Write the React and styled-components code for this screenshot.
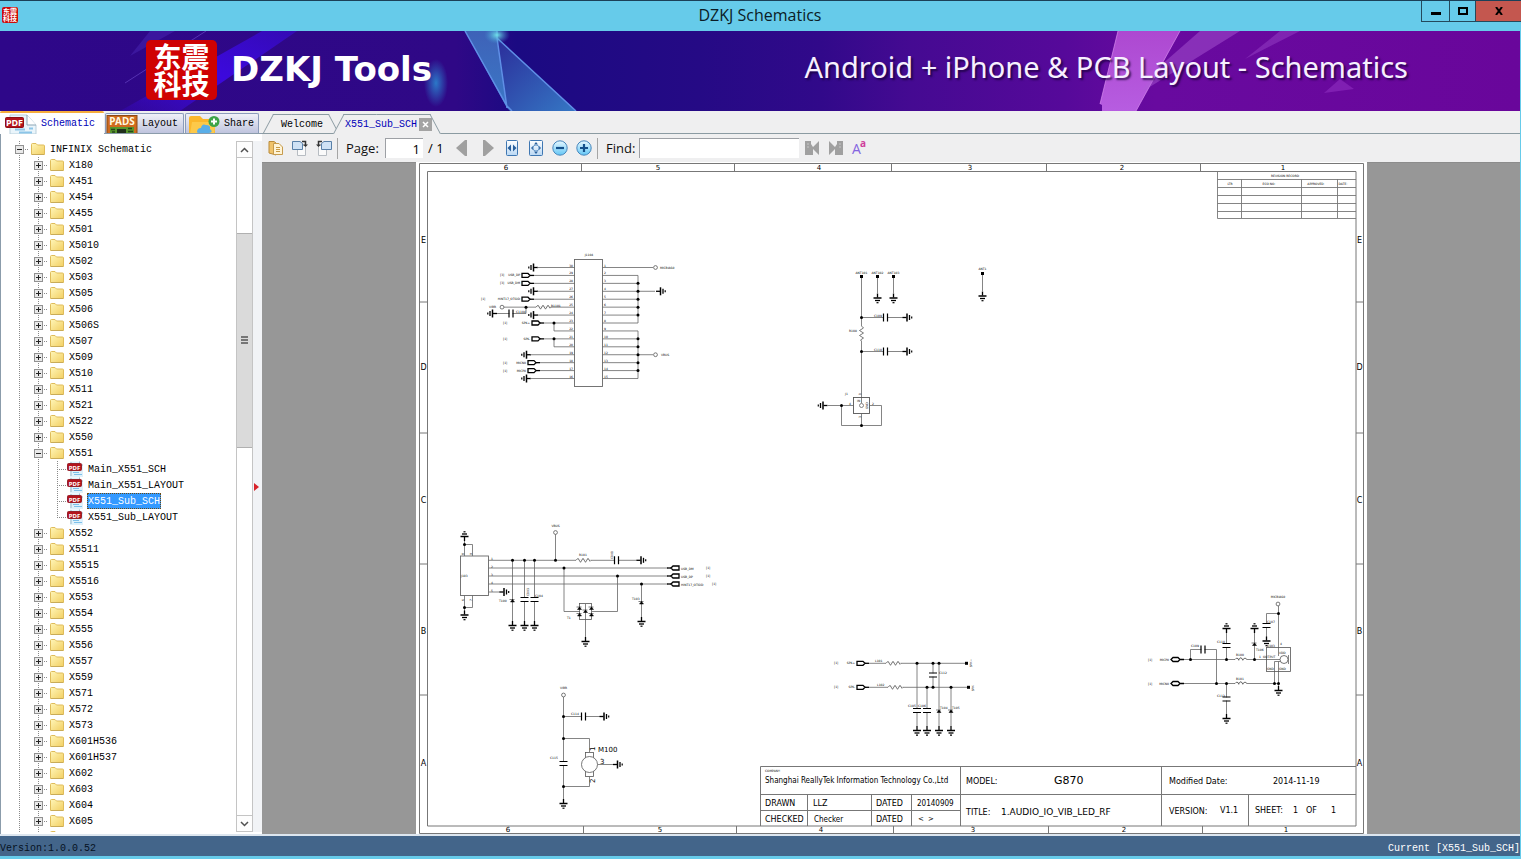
import React from "react";
import styled, { createGlobalStyle, css } from "styled-components";

const mono = `"Liberation Mono", "DejaVu Sans Mono", monospace`;
const sans = `"Open Sans", "Noto Sans", sans-serif`;

const GlobalStyle = createGlobalStyle`
  *, *::before, *::after { box-sizing: border-box; }
  html, body, #root { height: 100%; }
  body { margin: 0; overflow: hidden; background: #66cbea; color: #000; }
  button, input { font: inherit; color: inherit; }
  button { cursor: pointer; }
`;

/* ---------- window frame ---------- */

const Window = styled.div`
  display: flex;
  flex-direction: column;
  height: 100vh;
  padding: 0 1px 3px 0;
  background: #66cbea;
  border-top: 1px solid #1b4058;
`;

const TitleBar = styled.header`
  position: relative;
  display: flex;
  justify-content: center;
  flex: none;
  height: 30px;
  font-family: ${sans};
`;

const WindowTitle = styled.h1`
  margin: 0;
  font-size: 16px;
  line-height: 28px;
  font-weight: 400;
  color: #0b1c26;
`;

const AppMark = styled.span`
  position: absolute;
  left: 2px;
  top: 6px;
  width: 16px;
  height: 16px;
  display: grid;
  place-content: center;
  border-radius: 2px;
  background: #cc0a0a;
  color: #fff;
  font: 700 7px/7px "Noto Sans CJK SC", sans-serif;
  text-align: center;
`;

const WindowControls = styled.div`
  position: absolute;
  right: -1px;
  top: 0;
  display: flex;
  height: 21px;
  border: 1px solid #24495c;
  border-top: 0;
  border-right: 0;
`;

const WindowButton = styled.button`
  display: grid;
  place-items: center;
  width: ${(p) => p.$width}px;
  padding: 0;
  border: 0;
  border-right: ${(p) => (p.$close ? 0 : "1px solid #24495c")};
  background: ${(p) => (p.$close ? "#c4574f" : "transparent")};
`;

/* ---------- banner ---------- */

const Banner = styled.div`
  position: relative;
  display: flex;
  align-items: center;
  flex: none;
  height: 80px;
  padding: 0 112px 0 146px;
  overflow: hidden;
  color: #fff;
  background: linear-gradient(90deg, #2e0789 0%, #2f0886 30%, #1b0a82 34%, #250a85 46%, #31098a 54%, #450a92 60%, #56099a 70%, #680a9f 76%, #69069b 100%);
`;

const BannerArt = styled.svg`
  position: absolute;
  inset: 0;
  width: 100%;
  height: 100%;
`;

const Seal = styled.div`
  position: relative;
  display: grid;
  place-content: center;
  width: 71px;
  height: 60px;
  margin: 0 14px 2px 0;
  border-radius: 5px;
  background: #cf0202;
  font: 700 28px/27px "Noto Sans CJK SC", sans-serif;
  text-align: center;
`;

const Brand = styled.strong`
  position: relative;
  margin-bottom: 4px;
  font: 700 34px/40px "DejaVu Sans", "Noto Sans", sans-serif;
`;

const Tagline = styled.p`
  position: relative;
  margin: 0 0 8px auto;
  font: 400 29px/40px "Noto Sans", sans-serif;
  color: #f7f0ff;
  text-shadow: 2px 2px 2px rgba(20, 0, 50, 0.7);
`;

/* ---------- body ---------- */

const Body = styled.main`
  display: flex;
  flex: 1;
  min-height: 0;
  background: #efeff0;
  border-bottom: 2px solid #dde6ef;
`;

const Sidebar = styled.aside`
  display: flex;
  flex-direction: column;
  flex: none;
  width: 262px;
  font: 10px/16px ${mono};
`;

const SideTabs = styled.div`
  display: flex;
  align-items: flex-end;
  flex: none;
  gap: 1px;
  height: 23px;
  border-bottom: 1px solid #8b9cab;
`;

const SideTab = styled.button`
  display: flex;
  align-items: center;
  gap: 4px;
  width: ${(p) => p.$width}px;
  height: 20px;
  padding: 1px 0 0;
  border: 1px solid #8b9cbb;
  border-bottom: 0;
  border-radius: 2px 2px 0 0;
  background: linear-gradient(#f0f1f8, #bfc4de);
  overflow: hidden;
  white-space: nowrap;
  ${(p) =>
    p.$active &&
    css`
      height: 23px;
      margin-bottom: -1px;
      padding: 0 5px;
      border: 0;
      border-top: 2px solid #f5ac3c;
      background: #fff;
      color: #0000b8;
    `}
`;

const TreePane = styled.div`
  display: flex;
  flex: 1;
  min-height: 0;
  padding: 7px 0 2px;
  border-left: 1px solid #8b9cab;
  background: #fff;
`;

const Tree = styled.ul`
  flex: 1;
  min-width: 0;
  margin: 0;
  padding: 0 0 0 9px;
  overflow: hidden;
  list-style: none;
`;

const TreeRow = styled.li`
  display: flex;
  align-items: center;
  height: 16px;
`;

const Guide = styled.span`
  display: grid;
  place-items: center;
  flex: none;
  width: 19px;
  height: 16px;
  background:
    repeating-linear-gradient(#8a8a8a 0 1px, transparent 1px 2px) 9px 0 / 1px ${(p) => (p.$end ? "8px" : "16px")} no-repeat,
    repeating-linear-gradient(90deg, #8a8a8a 0 1px, transparent 1px 2px) 9px 8px / ${(p) => (p.$branch ? "10px" : "0")} 1px no-repeat;
`;

const Expander = styled.button`
  position: relative;
  width: 9px;
  height: 9px;
  padding: 0;
  border: 1px solid #919191;
  background: #e9e9e9;
  &::before,
  &::after {
    content: "";
    position: absolute;
    background: #222;
  }
  &::before {
    left: 1px;
    top: 3px;
    width: 5px;
    height: 1px;
  }
  &::after {
    left: 3px;
    top: 1px;
    width: 1px;
    height: ${(p) => (p.$open ? 0 : 5)}px;
  }
`;

const TreeIcon = styled.span`
  display: flex;
  flex: none;
  margin: ${(p) => (p.$file ? "0 3px 0 0" : "0 4px 0 2px")};
`;

const TreeLabel = styled.button`
  height: 16px;
  padding: 2px 1px 0;
  border: 0;
  background: ${(p) => (p.$selected ? "#3399ff" : "none")};
  color: ${(p) => (p.$selected ? "#fff" : "#000")};
  outline: ${(p) => (p.$selected ? "1px dotted #6b4a12" : "none")};
  outline-offset: -1px;
  line-height: 14px;
  white-space: nowrap;
`;

const ScrollTrack = styled.div`
  display: flex;
  flex-direction: column;
  flex: none;
  width: 17px;
  border: 1px solid #c4c4c4;
  background: #fff;
`;

const ScrollArrow = styled.button`
  display: grid;
  place-items: center;
  flex: none;
  height: 16px;
  padding: 0;
  border: 0 solid #c4c4c4;
  border-width: ${(p) => (p.$down ? "1px 0 0" : "0 0 1px")};
  background: #fdfdfd;
`;

const ScrollThumb = styled.div`
  display: grid;
  place-items: center;
  flex: 213;
  border: solid #b0b0b0;
  border-width: 1px 0;
  background: #dadada;
`;

const ScrollGap = styled.div`
  flex: ${(p) => p.$share};
`;

const Splitter = styled.div`
  display: grid;
  align-items: center;
  width: 9px;
  background: #f1f3f6;
`;

/* ---------- document area ---------- */

const DocArea = styled.section`
  display: flex;
  flex-direction: column;
  flex: 1;
  min-width: 0;
`;

const DocTabs = styled.div`
  display: flex;
  align-items: flex-end;
  flex: none;
  height: 23px;
  padding-left: 1px;
  border-bottom: 1px solid #8b9ba2;
  font: 10px/18px ${mono};
`;

const DocTab = styled.div`
  position: relative;
  display: flex;
  align-items: center;
  height: 20px;
  margin: 0 -5px -1px 0;
  padding: 0 ${(p) => (p.$active ? "9px 0 12px" : "15px 0 18px")};
  color: ${(p) => (p.$active ? "#0000b8" : "#000")};
  &::before,
  &::after {
    content: "";
    position: absolute;
    top: 0;
    bottom: ${(p) => (p.$active ? 0 : "1px")};
    border-top: 1px solid #8b9ba2;
    background: #efeff0;
  }
  &::before {
    left: 0;
    right: 50%;
    border-left: 1px solid #8b9ba2;
    transform: skewX(-28deg);
    transform-origin: bottom;
  }
  &::after {
    left: 50%;
    right: 0;
    border-right: 1px solid #8b9ba2;
    transform: skewX(28deg);
    transform-origin: bottom;
  }
`;

const DocTabButton = styled.button`
  position: relative;
  z-index: 1;
  padding: 1px 0 0;
  border: 0;
  background: none;
`;

const CloseTab = styled.button`
  position: relative;
  z-index: 1;
  display: grid;
  place-items: center;
  width: 13px;
  height: 13px;
  margin-left: 2px;
  padding: 0;
  border: 0;
  background: #a3a3a3;
`;

const Toolbar = styled.div`
  display: flex;
  align-items: center;
  flex: none;
  height: 28px;
  padding-left: 2px;
  background: #efeff0;
  font: 13px/20px ${sans};
`;

const ToolButton = styled.button`
  display: grid;
  place-items: center;
  width: 24px;
  height: 24px;
  padding: 0;
  border: 0;
  background: none;
`;

const ToolGroup = styled.div`
  display: flex;
  align-items: center;
  margin-left: ${(p) => p.$space || 0}px;
`;

const Divider = styled.span`
  width: 1px;
  height: 21px;
  margin: 0 8px 0 1px;
  background: #a5a5a5;
`;

const FieldLabel = styled.label`
  width: ${(p) => p.$width}px;
  color: #111;
`;

const Field = styled.input`
  width: ${(p) => p.$width}px;
  height: 20px;
  padding: 0 3px;
  border: 0;
  border-top: 1px solid #9da0a5;
  border-left: 1px solid #9da0a5;
  background: #fff;
  text-align: ${(p) => p.$align || "left"};
`;

const PageCount = styled.span`
  width: 27px;
  padding-left: 5px;
  white-space: nowrap;
`;

const Viewer = styled.div`
  display: flex;
  justify-content: center;
  flex: 1;
  min-height: 0;
  background: #979797;
  box-shadow: inset 0 1px #8c8c8c;
`;

const Sheet = styled.svg`
  height: 100%;
  max-width: 100%;
  background: #fff;
  font-family: "DejaVu Sans", sans-serif;
`;

const StatusBar = styled.footer`
  display: flex;
  justify-content: space-between;
  flex: none;
  height: 20px;
  padding-top: 6px;
  background: #43658a;
  color: #fff;
  font: 10px/14px ${mono};
`;

const Version = styled.span`
  color: #06121f;
`;

/* ---------- icons ---------- */

const PdfIcon = ({ large }) => (
  <svg width={large ? 32 : 17} height={large ? 20 : 16} viewBox={large ? "0 0 32 20" : "0 0 17 16"}>
    {large ? (
      <>
        <path d="M5 20V1H22L31 11V20Z" fill="#eaf5fb" stroke="#b9cfdb" />
        <path d="M22 1V11H31" fill="#fff" stroke="#8ba5b5" />
        <path d="M10 15.500H20M14 18.500H27M24 14.500H28" stroke="#8cc5e8" strokeWidth="2" />
        <rect x="0.500" y="3.500" width="18" height="10" rx="1" fill="#b3131c" stroke="#8e0d14" />
        <text x="9.500" y="12" fontSize="9" fontWeight="700" fill="#fff" textAnchor="middle" fontFamily="Noto Sans, sans-serif">PDF</text>
      </>
    ) : (
      <>
        <path d="M3 16V0.500H12.500L16 4V16Z" fill="#dff1fb" />
        <path d="M12.500 0.500V4H16" stroke="#9db8c8" fill="#fff" />
        <path d="M4 1V15" stroke="#9db8c8" />
        <path d="M6 11.500H12M7 13.500H15" stroke="#7dc0ea" fill="none" />
        <rect x="0.500" y="2.500" width="14" height="7" rx="1" fill="#b3131c" stroke="#96222a" />
        <text x="7.500" y="8.500" fontSize="6" fontWeight="700" fill="#fff" textAnchor="middle" fontFamily="Noto Sans, sans-serif">PDF</text>
      </>
    )}
  </svg>
);

const FolderIcon = () => (
  <svg width="14" height="13" viewBox="0 0 14 13">
    <defs>
      <linearGradient id="folder" x1="0" y1="0" x2="1" y2="1">
        <stop offset="0" stopColor="#fff6b8" />
        <stop offset="1" stopColor="#f2cf63" />
      </linearGradient>
    </defs>
    <path d="M0.500 11.500V1.500Q0.500 0.500 1.500 0.500H5L6.500 2H12.500Q13.500 2 13.500 3V11.500Z" fill="url(#folder)" stroke="#dfbc5b" />
    <path d="M1 11.500H13" stroke="#c9ab58" />
  </svg>
);

const PadsIcon = () => (
  <svg width="32" height="19" viewBox="0 0 32 19">
    <rect x="1" y="0.500" width="30" height="20" fill="#cf6a1e" stroke="#8a4a17" />
    <text x="16" y="10" fontSize="10" fontWeight="700" fill="#fff7df" textAnchor="middle" fontFamily="Noto Sans, sans-serif">PADS</text>
    <rect x="4" y="12" width="24" height="7" fill="#57962c" />
    <rect x="11" y="14" width="9" height="5" fill="#20301c" />
    <path d="M5 14.500H9M22 13.500H26M6 17H9M22 16.500H27" stroke="#24461b" strokeWidth="1.500" />
  </svg>
);

const ShareIcon = () => (
  <svg width="34" height="19" viewBox="-2 0 34 19">
    <path d="M1 19V3Q1 1 3 1H12L15 4H25Q27 4 27 6V19Z" fill="#fbb72c" />
    <path d="M2 19L4 7H28L26 19Z" fill="#fdc94a" />
    <path d="M9 17Q9 13 13 13Q14 8 18 10Q23 10 22 14Q26 17 21 18H11Q9 18 9 17Z" fill="#5aaee8" />
    <circle cx="26" cy="6.500" r="5.500" fill="#3da447" />
    <path d="M23 6.500H29M26 3.500V9.500" stroke="#fff" strokeWidth="2" />
  </svg>
);

const OpenIcon = () => (
  <svg width="16" height="16" viewBox="0 0 16 16">
    <path d="M1 1.500H6L8 3V15L1 13Z" fill="#f0c36a" stroke="#b98b3a" />
    <path d="M5.500 3.500H11L14.500 7V14.500H5.500Z" fill="#fff4d6" stroke="#c69b4d" />
    <path d="M8 7.500H12M8 9.500H12M8 11.500H12" stroke="#c79a45" />
  </svg>
);

const RotateIcon = ({ flip }) => (
  <svg width="16" height="16" viewBox="0 0 16 16">
    <g transform={flip ? "translate(16 0) scale(-1 1)" : undefined}>
      <path d="M5.500 5.500H13.500V15.500H5.500Z" fill="#fafafa" stroke="#b7bcc2" />
      <path d="M0.500 1.500H8L10.500 3.500V9.500H0.500Z" fill="#cfe2f5" stroke="#5980a8" />
      <path d="M10 1.500H13.500V5" fill="none" stroke="#333" strokeWidth="1.500" />
      <path d="M11 4.500H16L13.500 7Z" fill="#333" />
    </g>
  </svg>
);

const Triangle = ({ flip }) => (
  <svg width="12" height="16" viewBox="0 0 12 16">
    <path d={flip ? "M1 0V16H3L12 8L3 0Z" : "M11 0V16H9L0 8L9 0Z"} fill="#a0a0a0" />
  </svg>
);

const FitIcon = ({ page }) => (
  <svg width="14" height="17" viewBox="0 0 14 17">
    <defs>
      <linearGradient id="fit" x1="0" y1="0" x2="0" y2="1">
        <stop offset="0" stopColor="#fff" />
        <stop offset="1" stopColor="#bad8f4" />
      </linearGradient>
    </defs>
    <rect x={page ? 0.5 : 1.5} y="0.500" width={page ? 13 : 11} height="15" rx="1" fill="url(#fit)" stroke="#3f77b2" />
    <path d={page ? "M7 2L9 4.500H5ZM7 14L5 11.500H9ZM2 8L4 6V10ZM12 8L10 6V10Z" : "M2.500 8L6 4.500V11.500ZM11.500 8L8 4.500V11.500Z"} fill="#285f9c" />
    {page && <circle cx="7" cy="8" r="3" fill="none" stroke="#6b9bcb" />}
  </svg>
);

const ZoomIcon = ({ plus }) => (
  <svg width="16" height="16" viewBox="0 0 16 16">
    <defs>
      <linearGradient id="lens" x1="0" y1="0" x2="0" y2="1">
        <stop offset="0" stopColor="#e8f8ff" />
        <stop offset="1" stopColor="#62c6f6" />
      </linearGradient>
    </defs>
    <circle cx="8" cy="8" r="7.200" fill="url(#lens)" stroke="#4787bd" />
    <path d={plus ? "M4 8H12M8 4V12" : "M4 8H12"} stroke="#14508b" strokeWidth="2.200" />
  </svg>
);

const FindIcon = ({ next }) => (
  <svg width="16" height="16" viewBox="0 0 16 16">
    <g transform={next ? "translate(16 0) scale(-1 1)" : undefined} fill="#a0a0a0">
      <path d="M1 1H7V4L9 7L15 1V15L9 9V15H1Z" />
      <path d="M3 4H5M3 7H5" stroke="#c6c6c6" />
    </g>
  </svg>
);

const CaseIcon = () => (
  <svg width="18" height="20" viewBox="0 0 18 20" fontFamily="Open Sans, sans-serif">
    <text x="1" y="16" fontSize="14" fill="#8465e0">A</text>
    <text x="9" y="9" fontSize="10" fontWeight="700" fill="#cf3f9c">a</text>
  </svg>
);

const Chevron = ({ down }) => (
  <svg width="9" height="6" viewBox="0 0 9 6">
    <path d={down ? "M1 1L4.500 4.500L8 1" : "M1 5L4.500 1.500L8 5"} fill="none" stroke="#505050" strokeWidth="1.500" />
  </svg>
);

/* ---------- schematic symbols ---------- */

const angle = { down: 0, left: 90, up: 180, right: 270 };

const Ground = ({ x, y, dir = "down" }) => (
  <g transform={`translate(${x} ${y}) rotate(${angle[dir]})`} stroke="#000">
    <path d="M0 -6V-2" strokeWidth="1.300" />
    <path d="M-4 -1.500H4" strokeWidth="1.500" />
    <path d="M-2.500 1H2.500" strokeWidth="1.300" />
    <path d="M-1 3.200H1" strokeWidth="1.200" />
  </g>
);

const Port = ({ x, y, flip }) => (
  <g transform={`translate(${x} ${y})${flip ? " scale(-1 1)" : ""}`} stroke="#000" fill="none">
    <path d="M0 -2H6L8 0L6 2H0Z" strokeWidth="1.300" />
    <path d="M8 0H12" strokeWidth="1.300" />
  </g>
);

const Node = ({ x, y }) => <circle cx={x} cy={y} r="1.500" fill="#000" />;
const Pad = ({ x, y }) => <rect x={x - 1.5} y={y - 1.5} width="3" height="3" fill="#000" />;
const Terminal = ({ x, y }) => <circle cx={x} cy={y} r="1.900" fill="#fff" stroke="#444" strokeWidth="0.700" />;

const Cap = ({ x, y, across }) => (
  <g transform={`translate(${x} ${y})${across ? " rotate(90)" : ""}`}>
    <rect x="-4" y="-1.500" width="8" height="3" fill="#fff" />
    <path d="M-4 -2H4M-4 2H4" stroke="#000" strokeWidth="1.200" />
  </g>
);

const Resistor = ({ x, y, vertical }) => (
  <g transform={`translate(${x} ${y})${vertical ? " rotate(90)" : ""}`} fill="none">
    <path d="M0 0H15" stroke="#fff" strokeWidth="1.500" />
    <path d="M0 0L2 -2L4.500 2L7 -2L9.500 2L12 -2L14 1L15 0" stroke="#555" strokeWidth="0.800" />
  </g>
);

const Coil = ({ x, y }) => (
  <g transform={`translate(${x} ${y})`} fill="none">
    <path d="M0 0H12" stroke="#fff" strokeWidth="1.500" />
    <path d="M0 0Q1 -2 3 -1Q4 2 4 0Q5 -3 7 -1Q8 2 8 0Q10 -3 12 0" stroke="#444" strokeWidth="0.800" />
  </g>
);

const Diode = ({ x, y }) => <path d={`M${x - 2} ${y + 1.5}H${x + 2}L${x} ${y - 1}ZM${x - 3} ${y - 1}H${x + 2}`} fill="#000" stroke="#000" strokeWidth="0.500" />;

const Tag = ({ x, y, children, rotate, end, mid }) => (
  <text
    x={x}
    y={y}
    fontSize="3"
    fill="#000"
    textAnchor={end ? "end" : mid ? "middle" : "start"}
    transform={rotate ? `rotate(-90 ${x} ${y})` : undefined}
  >
    {children}
  </text>
);

const Wire = ({ d }) => <path d={d} fill="none" stroke="#666" strokeWidth="0.800" />;

const pinY = (i) => 267.5 + i * 7.93;

const Connector = () => (
  <g>
    <Tag x={589} y={256} mid>J1104</Tag>
    <rect x="574.500" y="259.500" width="28" height="127" fill="none" stroke="#666" strokeWidth="0.900" />
    {Array.from({ length: 15 }, (_, i) => (
      <g key={i}>
        <Tag x={573} y={pinY(i) - 1} end>{30 - i}</Tag>
        <Tag x={604} y={pinY(i) - 1}>{i + 1}</Tag>
        <Wire d={`M602.500 ${pinY(i)}H${i === 0 || i === 11 ? 653 : 638}`} />
      </g>
    ))}
    <Wire d={`M638 ${pinY(1)}V${pinY(7)}M638 ${pinY(8)}V${pinY(14)}M638 ${pinY(3)}H655`} />
    {[2, 3, 4, 5, 6, 9, 10, 11, 12, 13].map((i) => <Node key={i} x={638} y={pinY(i)} />)}
    <Ground x={662} y={pinY(3)} dir="right" />
    <Terminal x={655.5} y={pinY(0)} />
    <Terminal x={655.5} y={pinY(11)} />
    <Tag x={660} y={pinY(0) + 1}>MICBIAS0</Tag>
    <Tag x={661} y={pinY(11) + 1}>VBUS</Tag>

    {[[0, 532], [3, 532], [6, 532], [11, 525], [14, 525]].map(([i, x]) => (
      <g key={i}>
        <Ground x={x} y={pinY(i)} dir="left" />
        <Wire d={`M${x + 5} ${pinY(i)}H574.500`} />
      </g>
    ))}
    {[
      [1, 522, "USB_DP", "[3]", 500],
      [2, 522, "USB_DM", "[3]", 500],
      [4, 522, "HINT17_OTGID", "[1]", 481],
      [7, 532, "SPK+", "[1]", 503],
      [9, 532, "SPK-", "[1]", 503],
      [12, 528, "MICN0", "[1]", 503],
      [13, 528, "MICP0", "[1]", 503],
    ].map(([i, x, name, sheet, sx]) => (
      <g key={i}>
        <Port x={x} y={pinY(i)} />
        <Wire d={`M${x + 12} ${pinY(i)}H574.500`} />
        <Tag x={x - 2} y={pinY(i) + 1} end>{name}</Tag>
        <Tag x={sx} y={pinY(i) + 1}>{sheet}</Tag>
      </g>
    ))}
    <Wire d={`M554 ${pinY(7)}V${pinY(8)}H574.500M554 ${pinY(9)}V${pinY(10)}H574.500`} />
    <Node x={554} y={pinY(7)} />
    <Node x={554} y={pinY(9)} />
    <Wire d={`M504 ${pinY(5)}H574.500M526 ${pinY(5)}V313.500H495`} />
    <Resistor x={536} y={pinY(5)} />
    <Node x={526} y={pinY(5)} />
    <Terminal x={502} y={pinY(5)} />
    <Cap x={511} y={313.5} across />
    <Ground x={491} y={313.5} dir="left" />
    <Tag x={489} y={308}>VIBR</Tag>
    <Tag x={551} y={306.5}>R1101</Tag>
    <Tag x={516} y={312.5}>C1104</Tag>
  </g>
);

const Antennas = () => (
  <g>
    <Tag x={861.5} y={273.5} mid>ANT101</Tag>
    <Tag x={877.5} y={273.5} mid>ANT102</Tag>
    <Tag x={893.5} y={273.5} mid>ANT103</Tag>
    <Tag x={982.5} y={270} mid>ANT1</Tag>
    <Wire d="M861.500 277V398M877.500 277V293M893.500 277V293M982.500 274V291M861.500 317.500H903M861.500 351.500H903" />
    {[861.5, 877.5, 893.5].map((x) => <Pad key={x} x={x} y={276.5} />)}
    <Pad x={982.5} y={273.5} />
    <Ground x={877.5} y={299.5} />
    <Ground x={893.5} y={299.5} />
    <Ground x={982.5} y={297.5} />
    {[317.5, 351.5].map((y, i) => (
      <g key={y}>
        <Node x={861.5} y={y} />
        <Cap x={885.5} y={y} across />
        <Ground x={908.5} y={y} dir="right" />
        <Tag x={874} y={y - 1}>{i ? "C110" : "C109"}</Tag>
      </g>
    ))}
    <Resistor x={861.5} y={326} vertical />
    <Tag x={849} y={332}>R108</Tag>
    <rect x="853.500" y="397.500" width="16" height="16" fill="none" stroke="#555" strokeWidth="0.900" />
    <circle cx="861.500" cy="405.500" r="2" fill="none" stroke="#555" strokeWidth="0.700" />
    <Wire d="M828 405.500H853.500M841.500 405.500V425.500H881.500V405.500H869.500M861.500 413.500V425.500M861.500 398V403" />
    <Node x={841.5} y={405.5} />
    <Node x={861.5} y={425.5} />
    <Ground x={821.5} y={405.5} dir="left" />
    <Tag x={845} y={395}>J1</Tag>
    <Tag x={849} y={404.5}>4</Tag>
    <Tag x={872} y={404.5}>2</Tag>
    <Tag x={861} y={395} rotate>1</Tag>
    <Tag x={861} y={418} rotate>3</Tag>
    <Tag x={867.5} y={409} rotate>GND</Tag>
    <Tag x={857} y={402}>IN</Tag>
  </g>
);

const Usb = () => (
  <g>
    <rect x="460.500" y="556" width="28" height="39.500" fill="none" stroke="#666" strokeWidth="0.900" />
    <Tag x={461} y={576.5}>J103</Tag>
    <Wire d="M464.500 556V540M472.500 556V544.500H464.500M464.500 595.500V611M472.500 595.500V607.500H464.500" />
    <Node x={464.5} y={544.5} />
    <Node x={464.5} y={607.5} />
    <Ground x={464.5} y={535} dir="up" />
    <Ground x={464.5} y={616.5} />
    {[["8", 464, 555], ["9", 472, 555], ["6", 464, 601], ["7", 472, 601]].map(([t, x, y]) => <Tag key={t} x={x} y={y} rotate>{t}</Tag>)}
    {[1, 2, 3, 4, 5].map((n) => <Tag key={n} x={491} y={551.5 + n * 8}>{n}</Tag>)}
    <Wire d="M488.500 560.300H637M488.500 568H668M488.500 576H668M488.500 584H668M488.500 592H500" />
    <Wire d="M512.500 560V621M524.500 560V621M534.500 560V621M555.500 534V560M564 568V611.500H580M617.500 576V611.500H592M641.500 584V617M585.500 604V637" />
    {[512.5, 524.5, 534.5, 555.5].map((x) => <Node key={x} x={x} y={560.3} />)}
    <Node x={564} y={568} />
    <Node x={617.5} y={576} />
    <Node x={641.5} y={584} />
    <Terminal x={555.5} y={532.5} />
    <Tag x={555.5} y={526.5} mid>VBUS</Tag>
    <Resistor x={576} y={560.3} />
    <Tag x={579} y={556}>R101</Tag>
    <Cap x={616.5} y={560.3} across />
    <Tag x={613} y={559} rotate>C101</Tag>
    <Ground x={642.5} y={560.3} dir="right" />
    <Ground x={505.5} y={592} dir="right" />
    {[[568, "USB_DM", 706], [576, "USB_DP", 706], [584, "HINT17_OTGID", 712]].map(([y, name, sx]) => (
      <g key={name}>
        <Port x={679} y={y} flip />
        <Tag x={681} y={y + 1.5}>{name}</Tag>
        <Tag x={sx} y={y + 1}>[1]</Tag>
      </g>
    ))}
    <Diode x={512.5} y={600.5} />
    <Diode x={641.5} y={602.5} />
    <Cap x={524.5} y={599.5} />
    <Cap x={534.5} y={599.5} />
    {[512.5, 524.5, 534.5].map((x) => <Ground key={x} x={x} y={627} />)}
    <Ground x={641.5} y={623} />
    <Ground x={585.5} y={643} />
    <Tag x={499} y={602}>T100</Tag>
    <Tag x={529} y={596} rotate>C103</Tag>
    <Tag x={535} y={597}>C104</Tag>
    <Tag x={632} y={600}>T103</Tag>
    <Tag x={567} y={618.5}>T1</Tag>
    <rect x="579.500" y="603.500" width="12" height="16" fill="none" stroke="#555" strokeWidth="0.800" />
    <Diode x={585.5} y={611} />
    {[[579.5, 608], [579.5, 614.5], [591.5, 608], [591.5, 614.5]].map(([x, y]) => <Diode key={`${x}-${y}`} x={x} y={y} />)}
  </g>
);

const Motor = () => (
  <g>
    <Tag x={563.5} y={689} mid>VIBR</Tag>
    <Wire d="M563.500 697V799M563.500 716.500H601M563.500 738.500H589.500V752M589.500 776.500V786.500H563.500M597.500 764.500H613" />
    <Terminal x={563.5} y={695} />
    {[716.5, 738.5, 786.5].map((y) => <Node key={y} x={563.5} y={y} />)}
    <Cap x={583.5} y={716.5} across />
    <Ground x={605.5} y={716.5} dir="right" />
    <Tag x={571} y={715}>C114</Tag>
    <Cap x={563.5} y={763.5} />
    <Tag x={550} y={758.5}>C115</Tag>
    <Ground x={563.5} y={805} />
    <rect x="585.500" y="752.500" width="8" height="5" fill="#fff" stroke="#555" strokeWidth="0.800" />
    <rect x="585.500" y="771.500" width="8" height="5" fill="#fff" stroke="#555" strokeWidth="0.800" />
    <circle cx="589.500" cy="764.500" r="8" fill="#fff" stroke="#555" strokeWidth="0.800" />
    <Ground x={619} y={764.5} dir="right" />
    <text x="598" y="752" fontSize="7">M100</text>
    <text x="600" y="764" fontSize="7">3</text>
    <text x="595" y="751" fontSize="7" transform="rotate(-90 595 751)">1</text>
    <text x="595" y="783" fontSize="7" transform="rotate(-90 595 783)">2</text>
  </g>
);

const Speaker = () => (
  <g>
    {[[663.3, "SPK+", "L101", 886, 966], [687.3, "SPK-", "L102", 888, 968]].map(([y, name, coil, rx, ex]) => (
      <g key={name}>
        <Tag x={834} y={y + 1}>[1]</Tag>
        <Tag x={855} y={y + 1} end>{name}</Tag>
        <Port x={857} y={y} />
        <Wire d={`M869 ${y}H${ex}`} />
        <Resistor x={rx} y={y} />
        <Tag x={rx - 11} y={y - 1.5}>{coil}</Tag>
        <Pad x={ex + 0.5} y={y} />
        <Tag x={ex + 6} y={y + 4} rotate>{name}</Tag>
      </g>
    ))}
    <Wire d="M917 663V726M927 687V726M933 663V687M939 663V726M951 687V726" />
    {[[917, 663.3], [933, 663.3], [939, 663.3], [927, 687.3], [933, 687.3], [951, 687.3]].map(([x, y]) => <Node key={`${x}-${y}`} x={x} y={y} />)}
    <Cap x={933} y={675} />
    <Cap x={917} y={710.5} />
    <Cap x={927} y={710.5} />
    <Diode x={939} y={711} />
    <Diode x={951} y={711} />
    {[917, 927, 939, 951].map((x) => <Ground key={x} x={x} y={732} />)}
    <Tag x={939} y={674}>C112</Tag>
    <Tag x={908} y={707}>C105</Tag>
    <Tag x={918} y={707}>C106</Tag>
    <Tag x={940} y={708.5}>T104</Tag>
    <Tag x={952} y={708.5}>T105</Tag>
  </g>
);

const Microphone = () => (
  <g>
    <Wire d="M1182 659.500H1280M1182 683.500H1278.500M1190.500 659.500V649.500H1216.500V683.500M1226.500 632V659.500M1226.500 683.500V714M1254.500 632V659.500M1278.500 606V656M1278.500 613.500H1266.500V637M1274.500 683.500V661.500H1282M1278.500 661.500V686" />
    <rect x="1266.500" y="647.500" width="24" height="24" fill="none" stroke="#555" strokeWidth="0.800" />
    {[[659.5, "MICP0"], [683.5, "MICN0"]].map(([y, name]) => (
      <g key={name}>
        <Tag x={1148} y={y + 1}>[1]</Tag>
        <Tag x={1169} y={y + 1} end>{name}</Tag>
        <path d={`M1173 ${y - 2}H1178L1180 ${y}L1178 ${y + 2}H1173L1171 ${y}ZM1180 ${y}H1184`} fill="none" stroke="#000" strokeWidth="1.300" />
        <Coil x={1235} y={y} />
        <Tag x={1236} y={y - 3.5}>{name === "MICP0" ? "B100" : "B101"}</Tag>
      </g>
    ))}
    {[[1190.5, 659.5], [1226.5, 659.5], [1254.5, 659.5], [1216.5, 683.5], [1226.5, 683.5], [1274.5, 683.5], [1278.5, 683.5], [1278.5, 613.5]].map(([x, y]) => <Node key={`${x}-${y}`} x={x} y={y} />)}
    <Cap x={1203} y={649.5} across />
    <Cap x={1226.5} y={645.5} />
    <Cap x={1226.5} y={699} />
    <Cap x={1266.5} y={625.5} />
    <Diode x={1254.5} y={644} />
    <Ground x={1226.5} y={627} dir="up" />
    <Ground x={1254.5} y={627} dir="up" />
    <Ground x={1226.5} y={720} />
    <Ground x={1266.5} y={642.5} />
    <Ground x={1278.5} y={692} />
    <Terminal x={1278} y={604} />
    <Tag x={1278} y={598} mid>MICBIAS0</Tag>
    <Tag x={1191} y={647}>C109</Tag>
    <Tag x={1217} y={643}>C110</Tag>
    <Tag x={1217} y={696.5}>C113</Tag>
    <Tag x={1267} y={622.5}>C107</Tag>
    <Tag x={1256} y={651}>T106</Tag>
    <Tag x={1259} y={658}>1</Tag>
    <Tag x={1263} y={657.5}>OUTPUT</Tag>
    <Tag x={1279} y={653.5}>VDD</Tag>
    <Tag x={1267} y={669.5}>GND</Tag>
    <Tag x={1279} y={669.5}>GND</Tag>
    <Tag x={1267} y={646.5}>U103</Tag>
    <Tag x={1280} y={645}>4</Tag>
    <circle cx="1284" cy="659.500" r="4" fill="#fff" stroke="#555" strokeWidth="0.800" />
    <Wire d="M1288.500 655V664" />
  </g>
);

const condensedText = [
  [765, 783, "Shanghai ReallyTek Information Technology Co.,Ltd", 8],
  [917, 806, "20140909", 8],
  [814, 822, "Checker", 8],
];

const blockText = [
  [966, 784, "MODEL:", 8],
  [1054, 784, "G870", 11],
  [1169, 784, "Modified Date:", 8],
  [1273, 784, "2014-11-19", 8],
  [765, 806, "DRAWN", 8],
  [813, 806, "LLZ", 8],
  [876, 806, "DATED", 8],
  [765, 822, "CHECKED", 8],
  [876, 822, "DATED", 8],
  [918, 821, "<", 7],
  [928, 821, ">", 7],
  [966, 815, "TITLE:", 8],
  [1001, 815, "1.AUDIO_IO_VIB_LED_RF", 9],
  [1169, 814, "VERSION:", 8],
  [1220, 813, "V1.1", 8],
  [1255, 813, "SHEET:", 8],
  [1293, 813, "1", 8],
  [1306, 813, "OF", 8],
  [1331, 813, "1", 8],
];

const Frame = () => (
  <g>
    <path d="M419.500 163.500H1363.500V833.500H419.500ZM427.500 171.500H1356V826H427.500Z" fill="none" stroke="#777" />
    <path
      d="M581.500 163V171M734.500 163V171M891.500 163V171M1046.500 163V171M1200.500 163V171M583.500 826V834M736.500 826V834M893.500 826V834M1048.500 826V834M1202.500 826V834M419 302H427M419 433H427M419 564H427M419 695H427M1356 302H1363M1356 433H1363M1356 564H1363M1356 695H1363"
      stroke="#777"
    />
    {[6, 5, 4, 3, 2, 1].map((n, i) => (
      <g key={n} fontSize="7" textAnchor="middle">
        <text x={[506, 658, 819, 970, 1122, 1283][i]} y="170">{n}</text>
        <text x={[508, 660, 821, 973, 1124, 1286][i]} y="832">{n}</text>
      </g>
    ))}
    {["E", "D", "C", "B", "A"].map((n, i) => (
      <g key={n} fontSize="8" textAnchor="middle">
        <text x="423.500" y={[243, 370, 503, 634, 766][i]}>{n}</text>
        <text x="1359.500" y={[243, 370, 503, 634, 766][i]}>{n}</text>
      </g>
    ))}
    <path d="M1217.500 171V218.500H1356M1217.500 179.500H1356M1217.500 187.500H1356M1217.500 195.500H1356M1217.500 203.500H1356M1217.500 211.500H1356M1241.500 179V218M1301.500 179V218M1337.500 179V218" fill="none" stroke="#777" strokeWidth="0.900" />
    <Tag x={1285} y={176.5} mid>REVISION RECORD</Tag>
    <Tag x={1230} y={185} mid>LTR</Tag>
    <Tag x={1269} y={185} mid>ECO NO:</Tag>
    <Tag x={1316} y={185} mid>APPROVED:</Tag>
    <Tag x={1343} y={185} mid>DATE:</Tag>
    <path d="M760.500 826V766.500H1356M760.500 794.500H1356M760.500 810.500H960.500M960.500 766V826M1161.500 766V826M1248.500 794V826M807.500 794V826M871.500 794V826M911.500 794V826" fill="none" stroke="#777" />
    <Tag x={765} y={772}>COMPANY:</Tag>
    <g fontFamily="DejaVu Sans Condensed, DejaVu Sans, sans-serif">
      {condensedText.map(([x, y, t, size]) => <text key={`${x}-${y}`} x={x} y={y} fontSize={size}>{t}</text>)}
    </g>
    {blockText.map(([x, y, t, size]) => <text key={`${x}-${y}`} x={x} y={y} fontSize={size}>{t}</text>)}
  </g>
);

/* ---------- data ---------- */

const before = ["X180", "X451", "X454", "X455", "X501", "X5010", "X502", "X503", "X505", "X506", "X506S", "X507", "X509", "X510", "X511", "X521", "X522", "X550"];
const files = ["Main_X551_SCH", "Main_X551_LAYOUT", "X551_Sub_SCH", "X551_Sub_LAYOUT"];
const after = ["X552", "X5511", "X5515", "X5516", "X553", "X554", "X555", "X556", "X557", "X559", "X571", "X572", "X573", "X601H536", "X601H537", "X602", "X603", "X604", "X605", "X606"];

const Folder = ({ name, open, root }) => (
  <TreeRow role="treeitem" aria-expanded={!!open}>
    {!root && <Guide />}
    <Guide $branch>
      <Expander $open={open} aria-label={`${open ? "Collapse" : "Expand"} ${name}`} />
    </Guide>
    <TreeIcon><FolderIcon /></TreeIcon>
    <TreeLabel>{name}</TreeLabel>
  </TreeRow>
);

const FileRow = ({ name, selected, last }) => (
  <TreeRow role="treeitem" aria-selected={!!selected}>
    <Guide />
    <Guide />
    <Guide $branch $end={last} />
    <TreeIcon $file><PdfIcon /></TreeIcon>
    <TreeLabel $selected={selected}>{name}</TreeLabel>
  </TreeRow>
);

export default function App() {
  return (
    <>
      <GlobalStyle />
      <Window>
        <TitleBar>
          <AppMark aria-hidden="true">东震<br />科技</AppMark>
          <WindowTitle>DZKJ Schematics</WindowTitle>
          <WindowControls>
            <WindowButton $width={28} aria-label="Minimize">
              <svg width="10" height="10"><path d="M0 7.500H10" stroke="#000" strokeWidth="3" /></svg>
            </WindowButton>
            <WindowButton $width={26} aria-label="Maximize">
              <svg width="10" height="8"><rect x="1" y="1" width="8" height="6" fill="none" stroke="#000" strokeWidth="2" /></svg>
            </WindowButton>
            <WindowButton $width={45} $close aria-label="Close">
              <svg width="8" height="8"><path d="M1 0L7 8M7 0L1 8" stroke="#000" strokeWidth="2" /></svg>
            </WindowButton>
          </WindowControls>
        </TitleBar>

        <Banner>
          <BannerArt viewBox="0 0 1520 80" preserveAspectRatio="none" aria-hidden="true">
            <defs>
              <linearGradient id="shard" x1="0" y1="0" x2="0" y2="1">
                <stop offset="0" stopColor="#3e62b8" />
                <stop offset="1" stopColor="#3b78c6" />
              </linearGradient>
              <linearGradient id="wing" x1="0" y1="0" x2="1" y2="1">
                <stop offset="0" stopColor="#2b2c9a" />
                <stop offset="1" stopColor="#3577c4" />
              </linearGradient>
              <linearGradient id="pink" x1="0" y1="0" x2="0" y2="1">
                <stop offset="0" stopColor="#b54fd6" />
                <stop offset="1" stopColor="#c066e8" />
              </linearGradient>
              <linearGradient id="beam" x1="1" y1="0" x2="0" y2="1">
                <stop offset="0" stopColor="#3a0be0" stopOpacity="0.500" />
                <stop offset="0.500" stopColor="#3c09dd" />
                <stop offset="1" stopColor="#3c09dd" stopOpacity="0.200" />
              </linearGradient>
              <radialGradient id="glow">
                <stop offset="0" stopColor="#2b78c8" />
                <stop offset="1" stopColor="#2b78c8" stopOpacity="0" />
              </radialGradient>
              <radialGradient id="spark">
                <stop offset="0" stopColor="#6fe0e8" />
                <stop offset="1" stopColor="#3f8fd0" stopOpacity="0" />
              </radialGradient>
            </defs>
            <path d="M262 0H297L180 80H120Z" fill="url(#beam)" />
            <path d="M206 0L125 52" stroke="#7d5cdd" strokeOpacity="0.500" />
            <path d="M150 0H175L130 25Z" fill="#5b3bd0" fillOpacity="0.300" />
            <ellipse cx="436" cy="52" rx="12" ry="24" fill="url(#glow)" />
            <path d="M465 0H497L507 77Z" fill="url(#shard)" />
            <path d="M497 7L507 77L510 80H576Z" fill="url(#wing)" />
            <path d="M465 0L507 75L512 80M497 0V7L507 77M497 7L576 80" fill="none" stroke="#5f8fe6" strokeWidth="1.500" />
            <ellipse cx="497" cy="4" rx="13" ry="9" fill="url(#spark)" />
            <path d="M1118 0H1180L1136 80H1102V74L1100 73Z" fill="url(#pink)" fillOpacity="0.900" />
            <path d="M1180 0L1136 80M1118 0L1100 73" stroke="#d98bef" strokeOpacity="0.700" />
            <path d="M1200 0H1240L1140 62L1160 35Z" fill="#b05fd8" fillOpacity="0.450" />
            <path d="M1280 0H1300L1245 28Z" fill="#a24fd0" fillOpacity="0.400" />
            <path d="M1324 62L1340 48L1354 58Z" fill="#8f2fc0" fillOpacity="0.600" />
          </BannerArt>
          <Seal>东震<br />科技</Seal>
          <Brand>DZKJ Tools</Brand>
          <Tagline>Android + iPhone &amp; PCB Layout - Schematics</Tagline>
        </Banner>

        <Body>
          <Sidebar>
            <SideTabs>
              <SideTab $active $width={104}><PdfIcon large />Schematic</SideTab>
              <SideTab $width={79}><PadsIcon />Layout</SideTab>
              <SideTab $width={74}><ShareIcon />Share</SideTab>
            </SideTabs>
            <TreePane>
              <Tree role="tree">
                <Folder name="INFINIX Schematic" open root />
                {before.map((n) => <Folder key={n} name={n} />)}
                <Folder name="X551" open />
                {files.map((n, i) => <FileRow key={n} name={n} selected={i === 2} last={i === 3} />)}
                {after.map((n) => <Folder key={n} name={n} />)}
              </Tree>
              <ScrollTrack>
                <ScrollArrow aria-label="Scroll up"><Chevron /></ScrollArrow>
                <ScrollGap $share={75} />
                <ScrollThumb>
                  <svg width="7" height="8"><path d="M0 1H7M0 4H7M0 7H7" stroke="#555" strokeWidth="1.500" /></svg>
                </ScrollThumb>
                <ScrollGap $share={368} />
                <ScrollArrow $down aria-label="Scroll down"><Chevron down /></ScrollArrow>
              </ScrollTrack>
              <Splitter>
                <svg width="6" height="8"><path d="M1 0L6 4L1 8Z" fill="#d8232a" /></svg>
              </Splitter>
            </TreePane>
          </Sidebar>

          <DocArea>
            <DocTabs>
              <DocTab><DocTabButton>Welcome</DocTabButton></DocTab>
              <DocTab $active>
                <DocTabButton>X551_Sub_SCH</DocTabButton>
                <CloseTab aria-label="Close tab">
                  <svg width="7" height="7"><path d="M1 1L6 6M6 1L1 6" stroke="#fff" strokeWidth="1.500" /></svg>
                </CloseTab>
              </DocTab>
            </DocTabs>
            <Toolbar>
              <ToolButton aria-label="Open"><OpenIcon /></ToolButton>
              <ToolButton aria-label="Rotate right"><RotateIcon /></ToolButton>
              <ToolButton aria-label="Rotate left"><RotateIcon flip /></ToolButton>
              <Divider />
              <FieldLabel htmlFor="page" $width={39}>Page:</FieldLabel>
              <Field id="page" $width={38} $align="right" defaultValue="1" />
              <PageCount>/ 1</PageCount>
              <ToolButton aria-label="Previous page"><Triangle /></ToolButton>
              <ToolGroup $space={2}>
                <ToolButton aria-label="Next page"><Triangle flip /></ToolButton>
                <ToolButton aria-label="Fit width"><FitIcon /></ToolButton>
                <ToolButton aria-label="Fit page"><FitIcon page /></ToolButton>
                <ToolButton aria-label="Zoom out"><ZoomIcon /></ToolButton>
                <ToolButton aria-label="Zoom in"><ZoomIcon plus /></ToolButton>
              </ToolGroup>
              <Divider />
              <FieldLabel htmlFor="find" $width={33}>Find:</FieldLabel>
              <Field id="find" $width={160} />
              <ToolGroup $space={1}>
                <ToolButton aria-label="Find previous"><FindIcon /></ToolButton>
                <ToolButton aria-label="Find next"><FindIcon next /></ToolButton>
                <ToolButton aria-label="Match case"><CaseIcon /></ToolButton>
              </ToolGroup>
            </Toolbar>
            <Viewer>
              <Sheet viewBox="416 162 951 672" role="img" aria-label="Schematic sheet 1.AUDIO_IO_VIB_LED_RF">
                <Frame />
                <Connector />
                <Antennas />
                <Usb />
                <Motor />
                <Speaker />
                <Microphone />
              </Sheet>
            </Viewer>
          </DocArea>
        </Body>

        <StatusBar>
          <Version>Version:1.0.0.52</Version>
          <span>Current [X551_Sub_SCH]</span>
        </StatusBar>
      </Window>
    </>
  );
}
